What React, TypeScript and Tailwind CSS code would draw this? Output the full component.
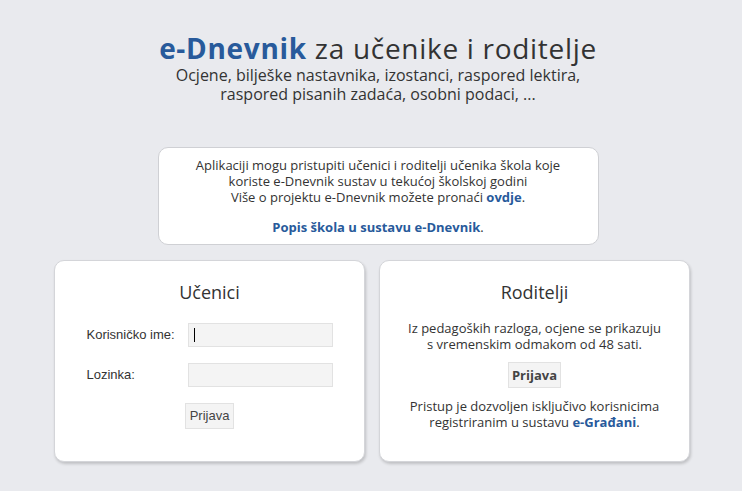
export default function App() {
  return (
    <div className="min-h-[491px] bg-[#e9eaee] font-['Open_Sans','DejaVu_Sans',sans-serif] text-[#333]">
      <div className="mx-auto flex w-[638px] flex-col items-center pt-[30px] pl-[14px]">
        <h1 className="text-[28px] leading-[36px] tracking-[0.7px] text-[#333]">
          <span className="font-bold text-[#285a9b]">e-Dnevnik</span> za učenike i roditelje
        </h1>
        <p className="text-center text-[16px] leading-[19px]">
          Ocjene, bilješke nastavnika, izostanci, raspored lektira,
          <br />
          raspored pisanih zadaća, osobni podaci, ...
        </p>

        <div className="mt-[43px] w-[441px] rounded-[10px] border border-[#cfd0d4] bg-white py-[9px] text-center text-[13px] leading-[16px]">
          <p>
            Aplikaciji mogu pristupiti učenici i roditelji učenika škola koje
            <br />
            koriste e-Dnevnik sustav u tekućoj školskoj godini
            <br />
            Više o projektu e-Dnevnik možete pronaći{" "}
            <a className="font-bold text-[#285a9b]">ovdje</a>.
          </p>
          <p className="mt-[14px]">
            <a className="font-bold text-[#285a9b]">Popis škola u sustavu e-Dnevnik</a>.
          </p>
        </div>
      </div>

      <div className="mx-auto mt-[15px] flex w-[638px] gap-[14px] pl-[2px]">
        <div className="flex h-[202px] w-[312px] flex-col items-center rounded-[10px] border border-[#d4d5d9] bg-white pt-[19px] shadow-[1px_2px_3px_rgba(0,0,0,0.18)]">
          <h2 className="text-[18px] leading-[24px]">Učenici</h2>
          <div className="mt-[19px] grid grid-cols-[101px_145px] items-center gap-y-[16px] font-['Liberation_Sans',Arial,sans-serif] text-[13px] text-[#333]">
            <label>Korisničko ime:</label>
            <div className="flex h-[24px] items-center border border-[#e2e2e2] bg-[#f4f4f4] pl-[5px]">
              <span className="h-[14px] w-px bg-black" />
            </div>
            <label>Lozinka:</label>
            <div className="h-[24px] border border-[#e2e2e2] bg-[#f4f4f4]" />
          </div>
          <button className="mt-[16px] h-[26px] border border-[#e2e2e2] bg-[#f4f4f4] px-[4px] font-['Liberation_Sans',Arial,sans-serif] text-[13px] text-[#444]">
            Prijava
          </button>
        </div>

        <div className="flex h-[202px] w-[312px] flex-col items-center rounded-[10px] border border-[#d4d5d9] bg-white pt-[19px] text-center text-[13px] leading-[16px] shadow-[1px_2px_3px_rgba(0,0,0,0.18)]">
          <h2 className="text-[18px] leading-[24px]">Roditelji</h2>
          <p className="mt-[16px]">
            Iz pedagoških razloga, ocjene se prikazuju
            <br />
            s vremenskim odmakom od 48 sati.
          </p>
          <button className="mt-[10px] h-[26px] border border-[#e2e2e2] bg-[#f4f4f4] px-[3px] text-[13px] font-bold text-[#444]">
            Prijava
          </button>
          <p className="mt-[10px]">
            Pristup je dozvoljen isključivo korisnicima
            <br />
            registriranim u sustavu{" "}
            <a className="font-bold text-[#285a9b]">e-Građani</a>.
          </p>
        </div>
      </div>
    </div>
  );
}
